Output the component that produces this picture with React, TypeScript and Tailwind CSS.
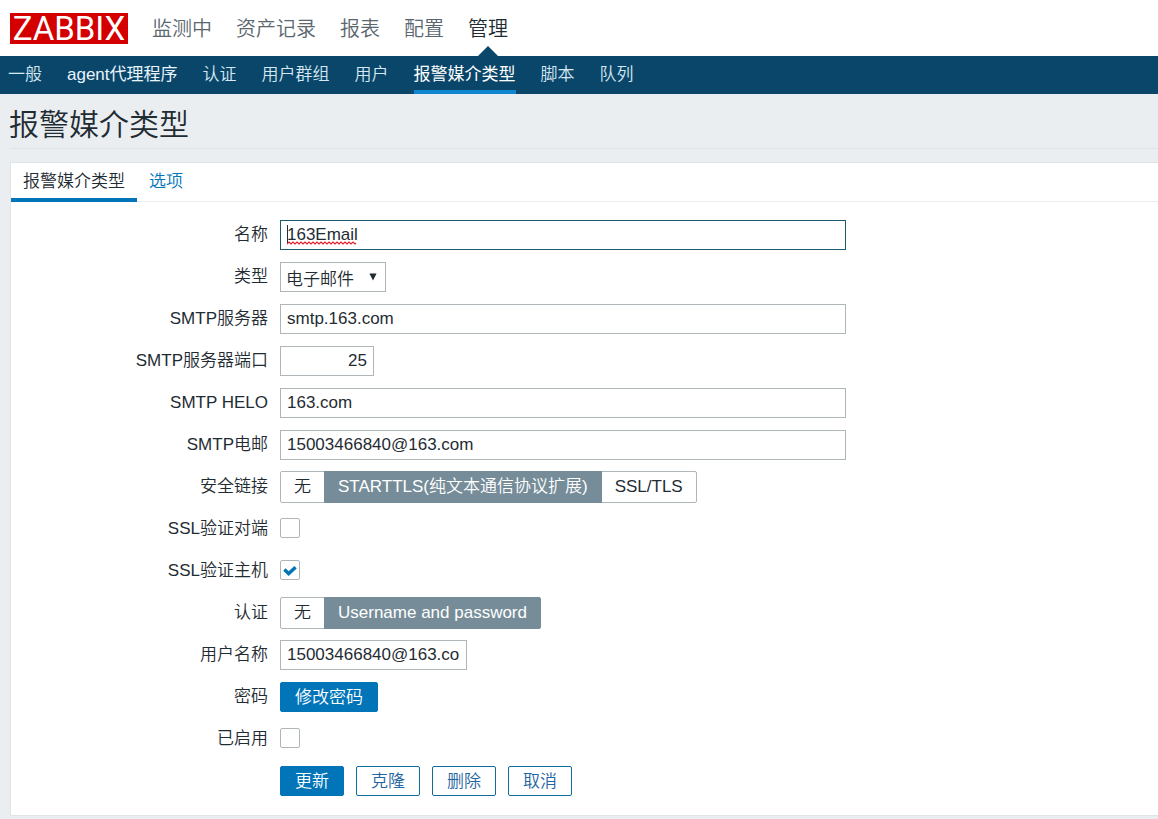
import React, { useState } from 'react';

const mainMenu = ['监测中', '资产记录', '报表', '配置', '管理'];
const subMenu = ['一般', 'agent代理程序', '认证', '用户群组', '用户', '报警媒介类型', '脚本', '队列'];

const inputClass =
  'block h-[30px] border bg-white px-[6px] text-[17px] leading-[28px] text-[#1f2c33] outline-none focus:border-[#0f5f80]';
const primaryButton =
  'h-[30px] rounded-xs border border-[#0275b8] bg-[#0275b8] px-[14px] pt-[2px] text-[17px] leading-[26px] text-white hover:bg-[#02659f]';
const secondaryButton =
  'h-[30px] rounded-xs border border-[#0d6c9c] bg-white px-[14px] pt-[2px] text-[17px] leading-[26px] text-[#1f65a0] hover:bg-[#e8f5ff]';

interface RowProps {
  label?: string;
  htmlFor?: string;
  children: React.ReactNode;
}

const Row: React.FC<RowProps> = ({ label, htmlFor, children }) => (
  <div className="flex h-[30px] items-center gap-3">
    <div className="w-[257px] shrink-0 text-right">
      {label && (htmlFor ? <label htmlFor={htmlFor}>{label}</label> : <span>{label}</span>)}
    </div>
    {children}
  </div>
);

interface CheckboxProps {
  id: string;
  checked: boolean;
  onChange: (checked: boolean) => void;
}

const Checkbox: React.FC<CheckboxProps> = ({ id, checked, onChange }) => (
  <span className="relative mb-[2px] block size-5">
    <input
      id={id}
      type="checkbox"
      checked={checked}
      onChange={(e) => onChange(e.target.checked)}
      className="block size-5 appearance-none rounded-xs border border-[#aeb6ba] bg-white"
    />
    {checked && (
      <svg viewBox="0 0 20 20" className="pointer-events-none absolute inset-0 size-5">
        <path d="M4.4 9.6 L8.6 13.6 L15.6 7.2" fill="none" stroke="#0275b8" strokeWidth="3.4" />
      </svg>
    )}
  </span>
);

interface SegmentedProps {
  name: string;
  label: string;
  options: string[];
  value: string;
  onChange: (value: string) => void;
}

const Segmented: React.FC<SegmentedProps> = ({ name, label, options, value, onChange }) => (
  <div role="radiogroup" aria-label={label} className="flex h-8">
    {options.map((option) => (
      <label
        key={option}
        className="-ml-px flex h-8 cursor-pointer items-center whitespace-nowrap border border-[#aeb6ba] bg-white px-[13px] first:ml-0 first:rounded-l-xs last:rounded-r-xs has-checked:relative has-checked:border-[#768d99] has-checked:bg-[#768d99] has-checked:text-white"
      >
        <input
          type="radio"
          name={name}
          value={option}
          checked={value === option}
          onChange={() => onChange(option)}
          className="sr-only"
        />
        {option}
      </label>
    ))}
  </div>
);

const App: React.FC = () => {
  const [name, setName] = useState('163Email');
  const [server, setServer] = useState('smtp.163.com');
  const [port, setPort] = useState('25');
  const [helo, setHelo] = useState('163.com');
  const [email, setEmail] = useState('15003466840@163.com');
  const [security, setSecurity] = useState('STARTTLS(纯文本通信协议扩展)');
  const [verifyPeer, setVerifyPeer] = useState(false);
  const [verifyHost, setVerifyHost] = useState(true);
  const [auth, setAuth] = useState('Username and password');
  const [username, setUsername] = useState('15003466840@163.com');
  const [enabled, setEnabled] = useState(false);

  return (
    <div className="min-h-screen bg-[#ebeef0] font-['Liberation_Sans','Noto_Sans_CJK_SC',sans-serif] text-[17px] leading-6 font-[350] text-[#1f2c33]">
      <header>
        <div className="flex h-14 items-center bg-white pl-[10px]">
          <a
            href="#"
            className="flex h-[31px] w-[118px] items-center justify-center bg-[#d40000] font-['Roboto',sans-serif] text-[33px] leading-none font-normal text-white"
          >
            ZABBIX
          </a>
          <nav className="ml-6 flex h-14 gap-6 text-[20px]">
            {mainMenu.map((item) => (
              <a
                key={item}
                href="#"
                className={`relative flex items-center pt-[2px] ${item === '管理' ? 'text-[#1f2c33]' : 'text-[#5a676f]'}`}
              >
                {item}
                {item === '管理' && (
                  <svg viewBox="0 0 20 10" className="absolute bottom-0 left-1/2 h-[10px] w-5 -translate-x-1/2">
                    <path d="M0 10 L10 0 L20 10 Z" fill="#0a466a" />
                  </svg>
                )}
              </a>
            ))}
          </nav>
        </div>
        <nav className="flex h-[38px] gap-[25px] bg-[#0a466a] pl-2">
          {subMenu.map((item) => (
            <a
              key={item}
              href="#"
              className={`flex items-center border-b-4 pt-1 ${
                item === '报警媒介类型'
                  ? 'border-[#0f86cf] font-normal text-white'
                  : item === 'agent代理程序'
                    ? 'border-transparent font-normal text-[#e9f4fb]'
                    : 'border-transparent text-[#d5e8f3]'
              }`}
            >
              {item}
            </a>
          ))}
        </nav>
      </header>

      <main className="pb-1 pl-[10px]">
        <div className="h-[55px] border-b border-[#dfe4e7]">
          <h1 className="-ml-px pt-2 text-[30px] leading-[46px]">报警媒介类型</h1>
        </div>

        <form
          className="mt-[13px] border border-r-0 border-[#dfe4e7] bg-white pb-[19px]"
          onSubmit={(e) => e.preventDefault()}
        >
          <div className="flex h-[39px] border-b border-[#ebeef0]">
            <a href="#" className="flex h-[39px] items-center border-b-4 border-[#0275b8] px-3 pt-[2px]">
              报警媒介类型
            </a>
            <a
              href="#"
              className="flex h-[39px] items-center border-b-4 border-transparent px-3 pt-[2px] text-[#0275b8]"
            >
              选项
            </a>
          </div>

          <div className="mt-[18px] flex flex-col gap-3">
            <Row label="名称" htmlFor="name">
              <div className="relative w-full max-w-[566px]">
                <input
                  id="name"
                  value={name}
                  spellCheck={false}
                  onChange={(e) => setName(e.target.value)}
                  className={`${inputClass} w-full border-[#1c5a70]`}
                />
                {/* spelling mark and text cursor */}
                <svg viewBox="0 0 72 20" className="pointer-events-none absolute top-[5px] left-[7px] h-5 w-[72px]">
                  <path d="M0.5 0 V18" stroke="#1f2c33" strokeWidth="1" />
                  <path
                    d="M0 19 l2 -2 l2 2 l2 -2 l2 2 l2 -2 l2 2 l2 -2 l2 2 l2 -2 l2 2 l2 -2 l2 2 l2 -2 l2 2 l2 -2 l2 2 l2 -2 l2 2 l2 -2 l2 2 l2 -2 l2 2 l2 -2 l2 2 l2 -2 l2 2 l2 -2 l2 2 l2 -2 l2 2 l2 -2 l2 2 l2 -2 l2 2 l1 -1"
                    fill="none"
                    stroke="#e0202c"
                    strokeWidth="1.2"
                  />
                </svg>
              </div>
            </Row>
            <Row label="类型" htmlFor="type">
              <div className="relative">
                <select
                  id="type"
                  className="block h-[30px] w-[106px] appearance-none border border-[#aeb6ba] bg-white pt-[5px] pl-[5px] text-[17px] leading-[23px] outline-none"
                >
                  <option>电子邮件</option>
                  <option>脚本</option>
                  <option>短信</option>
                </select>
                <svg viewBox="0 0 8 8" className="pointer-events-none absolute top-[11px] right-[9px] size-2">
                  <path d="M0.4 0.5 H7.6 L4 7.5 Z" fill="#1f2c33" />
                </svg>
              </div>
            </Row>
            <Row label="SMTP服务器" htmlFor="server">
              <input
                id="server"
                value={server}
                onChange={(e) => setServer(e.target.value)}
                className={`${inputClass} w-full max-w-[566px] border-[#aeb6ba]`}
              />
            </Row>
            <Row label="SMTP服务器端口" htmlFor="port">
              <input
                id="port"
                value={port}
                onChange={(e) => setPort(e.target.value)}
                className={`${inputClass} w-[94px] border-[#aeb6ba] text-right`}
              />
            </Row>
            <Row label="SMTP HELO" htmlFor="helo">
              <input
                id="helo"
                value={helo}
                onChange={(e) => setHelo(e.target.value)}
                className={`${inputClass} w-full max-w-[566px] border-[#aeb6ba]`}
              />
            </Row>
            <Row label="SMTP电邮" htmlFor="email">
              <input
                id="email"
                value={email}
                onChange={(e) => setEmail(e.target.value)}
                className={`${inputClass} w-full max-w-[566px] border-[#aeb6ba]`}
              />
            </Row>
            <Row label="安全链接">
              <Segmented
                name="security"
                label="安全链接"
                options={['无', 'STARTTLS(纯文本通信协议扩展)', 'SSL/TLS']}
                value={security}
                onChange={setSecurity}
              />
            </Row>
            <Row label="SSL验证对端" htmlFor="verify-peer">
              <Checkbox id="verify-peer" checked={verifyPeer} onChange={setVerifyPeer} />
            </Row>
            <Row label="SSL验证主机" htmlFor="verify-host">
              <Checkbox id="verify-host" checked={verifyHost} onChange={setVerifyHost} />
            </Row>
            <Row label="认证">
              <Segmented
                name="auth"
                label="认证"
                options={['无', 'Username and password']}
                value={auth}
                onChange={setAuth}
              />
            </Row>
            <Row label="用户名称" htmlFor="username">
              <input
                id="username"
                value={username}
                onChange={(e) => setUsername(e.target.value)}
                className={`${inputClass} w-[187px] border-[#aeb6ba]`}
              />
            </Row>
            <Row label="密码" htmlFor="password">
              <button id="password" type="button" className={primaryButton}>
                修改密码
              </button>
            </Row>
            <Row label="已启用" htmlFor="enabled">
              <Checkbox id="enabled" checked={enabled} onChange={setEnabled} />
            </Row>
            <Row>
              <div className="flex gap-3">
                <button type="submit" className={primaryButton}>
                  更新
                </button>
                <button type="button" className={secondaryButton}>
                  克隆
                </button>
                <button type="button" className={secondaryButton}>
                  删除
                </button>
                <button type="button" className={secondaryButton}>
                  取消
                </button>
              </div>
            </Row>
          </div>
        </form>
      </main>
    </div>
  );
};

export default App;
